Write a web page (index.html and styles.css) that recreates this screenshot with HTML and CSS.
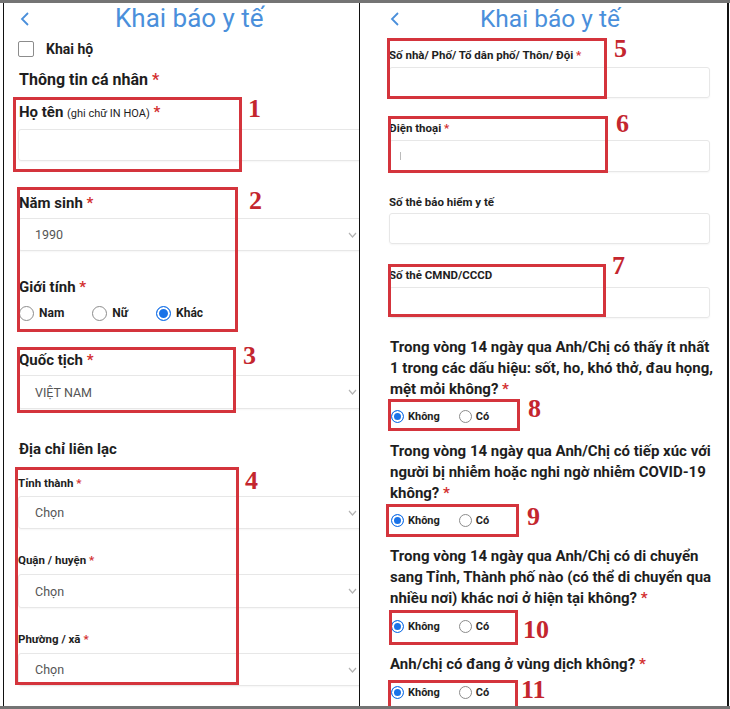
FILE: index.html
```html
<!DOCTYPE html>
<html lang="vi">
<head>
<meta charset="utf-8">
<title>Khai báo y tế</title>
<link rel="stylesheet" href="styles.css">
</head>
<body>
<div class="bar"></div>
<div class="frame">
  <div class="gutter"></div>
  <div class="vline"></div>

  <section class="panel panel-left">
    <header class="hdr hdr-left">
      <svg class="back" viewBox="0 0 9 14"><polyline points="8,1 2,7 8,13" fill="none" stroke="#4a8fdb" stroke-width="1.8"/></svg>
      <h1 class="title">Khai báo y tế</h1>
    </header>
    <div class="check-row"><span class="checkbox"></span><span>Khai hộ</span></div>
    <div class="sec-title">Thông tin cá nhân <span class="req">*</span></div>

    <div class="lbl-lg mt6">Họ tên <span class="hint">(ghi chữ IN HOA)</span> <span class="req">*</span></div>
    <div class="field mt5 h32"></div>

    <div class="lbl-lg mt32">Năm sinh <span class="req">*</span></div>
    <div class="field select mt5 h33">1990<svg class="chev" viewBox="0 0 9 6"><polyline points="1,1 4.5,5 8,1" fill="none" stroke="#b3b3b3" stroke-width="1.2"/></svg></div>

    <div class="lbl-lg mt26">Giới tính <span class="req">*</span></div>
    <div class="radios mt6">
      <label class="radio-item"><span class="radio"></span>Nam</label>
      <label class="radio-item"><span class="radio"></span>Nữ</label>
      <label class="radio-item"><span class="radio on"></span>Khác</label>
    </div>

    <div class="lbl-lg mt27">Quốc tịch <span class="req">*</span></div>
    <div class="field select mt5 h34">VIỆT NAM<svg class="chev" viewBox="0 0 9 6"><polyline points="1,1 4.5,5 8,1" fill="none" stroke="#b3b3b3" stroke-width="1.2"/></svg></div>

    <div class="lbl-lg mt30">Địa chỉ liên lạc</div>

    <div class="lbl-sm mt16">Tỉnh thành <span class="req">*</span></div>
    <div class="field select mt5 h33">Chọn<svg class="chev" viewBox="0 0 9 6"><polyline points="1,1 4.5,5 8,1" fill="none" stroke="#b3b3b3" stroke-width="1.2"/></svg></div>

    <div class="lbl-sm mt23">Quận / huyện <span class="req">*</span></div>
    <div class="field select mt6 h34">Chọn<svg class="chev" viewBox="0 0 9 6"><polyline points="1,1 4.5,5 8,1" fill="none" stroke="#b3b3b3" stroke-width="1.2"/></svg></div>

    <div class="lbl-sm mt23">Phường / xã <span class="req">*</span></div>
    <div class="field select mt6 h33">Chọn<svg class="chev" viewBox="0 0 9 6"><polyline points="1,1 4.5,5 8,1" fill="none" stroke="#b3b3b3" stroke-width="1.2"/></svg></div>
  </section>

  <div class="vline"></div>

  <section class="panel panel-right">
    <header class="hdr hdr-right">
      <svg class="back" viewBox="0 0 9 14"><polyline points="8,1 2,7 8,13" fill="none" stroke="#4a8fdb" stroke-width="1.8"/></svg>
      <h1 class="title">Khai báo y tế</h1>
    </header>

    <div class="lbl-sm mt13">Số nhà/ Phố/ Tổ dân phố/ Thôn/ Đội <span class="req">*</span></div>
    <div class="field mt4 h31"></div>

    <div class="lbl-sm mt22">Điện thoại <span class="req">*</span></div>
    <div class="field mt4 h32 with-cursor"><span class="cursor"></span></div>

    <div class="lbl-sm mt22">Số thẻ bảo hiểm y tế</div>
    <div class="field mt3 h31"></div>

    <div class="lbl-sm mt23">Số thẻ CMND/CCCD</div>
    <div class="field mt4 h31"></div>

    <div class="question mt19">Trong vòng 14 ngày qua Anh/Chị có thấy ít nhất<br>1 trong các dấu hiệu: sốt, ho, khó thở, đau họng,<br>mệt mỏi không? <span class="req">*</span></div>
    <div class="radios radios-sm mt6">
      <label class="radio-item"><span class="radio on"></span>Không</label>
      <label class="radio-item"><span class="radio"></span>Có</label>
    </div>

    <div class="question mt15">Trong vòng 14 ngày qua Anh/Chị có tiếp xúc với<br>người bị nhiễm hoặc nghi ngờ nhiễm COVID-19<br>không? <span class="req">*</span></div>
    <div class="radios radios-sm mt6">
      <label class="radio-item"><span class="radio on"></span>Không</label>
      <label class="radio-item"><span class="radio"></span>Có</label>
    </div>

    <div class="question mt16">Trong vòng 14 ngày qua Anh/Chị có di chuyển<br>sang Tỉnh, Thành phố nào (có thể di chuyển qua<br>nhiều nơi) khác nơi ở hiện tại không? <span class="req">*</span></div>
    <div class="radios radios-sm mt7">
      <label class="radio-item"><span class="radio on"></span>Không</label>
      <label class="radio-item"><span class="radio"></span>Có</label>
    </div>

    <div class="question mt18">Anh/chị có đang ở vùng dịch không? <span class="req">*</span></div>
    <div class="radios radios-sm mt7">
      <label class="radio-item"><span class="radio on"></span>Không</label>
      <label class="radio-item"><span class="radio"></span>Có</label>
    </div>
  </section>

  <div class="vline-thick"></div>
  <div class="edge"></div>
</div>
<div class="bar"></div>

<div class="box box-1"></div><span class="num num-1">1</span>
<div class="box box-2"></div><span class="num num-2">2</span>
<div class="box box-3"></div><span class="num num-3">3</span>
<div class="box box-4"></div><span class="num num-4">4</span>
<div class="box box-5"></div><span class="num num-5">5</span>
<div class="box box-6"></div><span class="num num-6">6</span>
<div class="box box-7"></div><span class="num num-7">7</span>
<div class="box box-8"></div><span class="num num-8">8</span>
<div class="box box-9"></div><span class="num num-9">9</span>
<div class="box box-10"></div><span class="num num-10">10</span>
<div class="box box-11"></div><span class="num num-11">11</span>
</body>
</html>
```

FILE: styles.css
```css
* { box-sizing: border-box; margin: 0; padding: 0; }

body {
  margin: 0;
  width: 730px;
  height: 709px;
  overflow: hidden;
  position: relative;
  background: #fff;
  font-family: Roboto, "Noto Sans", "Liberation Sans", sans-serif;
  color: #1e1e1e;
}

.bar { height: 3px; background: #747474; position: relative; z-index: 3; }

.frame { display: flex; height: 703px; }
.gutter { width: 3px; }
.vline { width: 1px; background: #111; }
.vline-thick { width: 2px; background: #111; }
.edge { width: 1px; }

.panel { overflow: hidden; display: flex; flex-direction: column; }
.panel-left { width: 355px; padding-left: 14px; }
.panel-right { width: 367px; padding-left: 29px; }

.hdr { height: 31px; display: flex; align-items: center; flex-shrink: 0; }
.back { width: 9px; height: 14px; flex-shrink: 0; }
.hdr-left .back { margin-left: 2px; }
.hdr-left .title { margin-left: 86px; font-size: 26px; }
.hdr-right .back { margin-left: 1px; }
.hdr-right .title { margin-left: 81px; font-size: 24.5px; }
.title { font-weight: 400; color: #4a8fdb; line-height: 31px; white-space: nowrap; }

.check-row { height: 30px; display: flex; align-items: center; gap: 12px; font-size: 14px; font-weight: 700; flex-shrink: 0; }
.checkbox { width: 16px; height: 16px; border: 1.5px solid #8c8c8c; border-radius: 2px; }

.sec-title { height: 32px; line-height: 32px; font-size: 16px; font-weight: 700; padding-left: 1px; flex-shrink: 0; }
.req { color: #d32f2f; }

.lbl-lg { font-size: 15px; font-weight: 700; line-height: 20px; padding-left: 1px; white-space: nowrap; flex-shrink: 0; }
.hint { font-size: 11px; font-weight: 400; }
.lbl-sm { font-size: 11.5px; font-weight: 700; line-height: 16px; white-space: nowrap; flex-shrink: 0; }

.field { border: 1px solid #e7e7e7; border-radius: 3px; box-shadow: 0 1px 2px rgba(0,0,0,0.04); flex-shrink: 0; }
.panel-left .field { width: 345px; }
.panel-right .field { width: 321px; }
.select { display: flex; align-items: center; padding-left: 16px; padding-right: 5px; font-size: 12.5px; color: #555; }
.chev { margin-left: auto; width: 9px; height: 6px; }
.with-cursor { display: flex; align-items: center; padding-left: 10px; }
.cursor { width: 1px; height: 8px; background: #bbb; }

.h31 { height: 31px; }
.h32 { height: 32px; }
.h33 { height: 33px; }
.h34 { height: 34px; }

.mt3 { margin-top: 3px; }
.mt4 { margin-top: 4px; }
.mt5 { margin-top: 5px; }
.mt6 { margin-top: 6px; }
.mt7 { margin-top: 7px; }
.mt13 { margin-top: 13px; }
.mt15 { margin-top: 15px; }
.mt16 { margin-top: 16px; }
.mt18 { margin-top: 18px; }
.mt19 { margin-top: 19px; }
.mt22 { margin-top: 22px; }
.mt23 { margin-top: 23px; }
.mt26 { margin-top: 26px; }
.mt27 { margin-top: 27px; }
.mt30 { margin-top: 30px; }
.mt32 { margin-top: 32px; }

.radios { display: flex; align-items: center; height: 20px; gap: 28px; padding-left: 1px; flex-shrink: 0; }
.radio-item { display: flex; align-items: center; gap: 5px; font-size: 12px; font-weight: 700; color: #1e1e1e; }
.radio { width: 15px; height: 15px; border-radius: 50%; border: 1.5px solid #8c8c8c; flex-shrink: 0; background: #fff; }
.radio.on { border-color: #1a73e8; background: #1a73e8; box-shadow: inset 0 0 0 2px #fff; }
.radios-sm { gap: 19px; padding-left: 2px; }
.radios-sm .radio-item { gap: 4px; font-size: 11px; }
.radios-sm .radio { width: 13px; height: 13px; }

.question { font-size: 15px; font-weight: 700; line-height: 21px; white-space: nowrap; flex-shrink: 0; padding-left: 1px; }

.box { position: absolute; border: 3px solid #d4343c; z-index: 2; }
.box-1 { left: 13px; top: 97px; width: 229px; height: 75px; }
.box-2 { left: 17px; top: 187px; width: 221px; height: 145px; }
.box-3 { left: 17px; top: 347px; width: 219px; height: 66px; }
.box-4 { left: 15px; top: 467px; width: 224px; height: 218px; }
.box-5 { left: 387px; top: 38px; width: 220px; height: 61px; }
.box-6 { left: 388px; top: 116px; width: 220px; height: 57px; }
.box-7 { left: 388px; top: 264px; width: 218px; height: 53px; }
.box-8 { left: 388px; top: 399px; width: 132px; height: 32px; }
.box-9 { left: 386px; top: 504px; width: 133px; height: 33px; }
.box-10 { left: 389px; top: 610px; width: 129px; height: 35px; }
.box-11 { left: 388px; top: 680px; width: 130px; height: 32px; }

.num { position: absolute; font-family: "Liberation Serif", "DejaVu Serif", serif; font-weight: 700; font-size: 26px; line-height: 26px; color: #c4262e; z-index: 2; }
.num-1 { left: 248px; top: 96px; }
.num-2 { left: 249px; top: 188px; }
.num-3 { left: 243px; top: 343px; }
.num-4 { left: 245px; top: 468px; }
.num-5 { left: 614px; top: 36px; }
.num-6 { left: 616px; top: 111px; }
.num-7 { left: 612px; top: 253px; }
.num-8 { left: 528px; top: 396px; }
.num-9 { left: 527px; top: 504px; }
.num-10 { left: 523px; top: 617px; }
.num-11 { left: 521px; top: 677px; }
```
